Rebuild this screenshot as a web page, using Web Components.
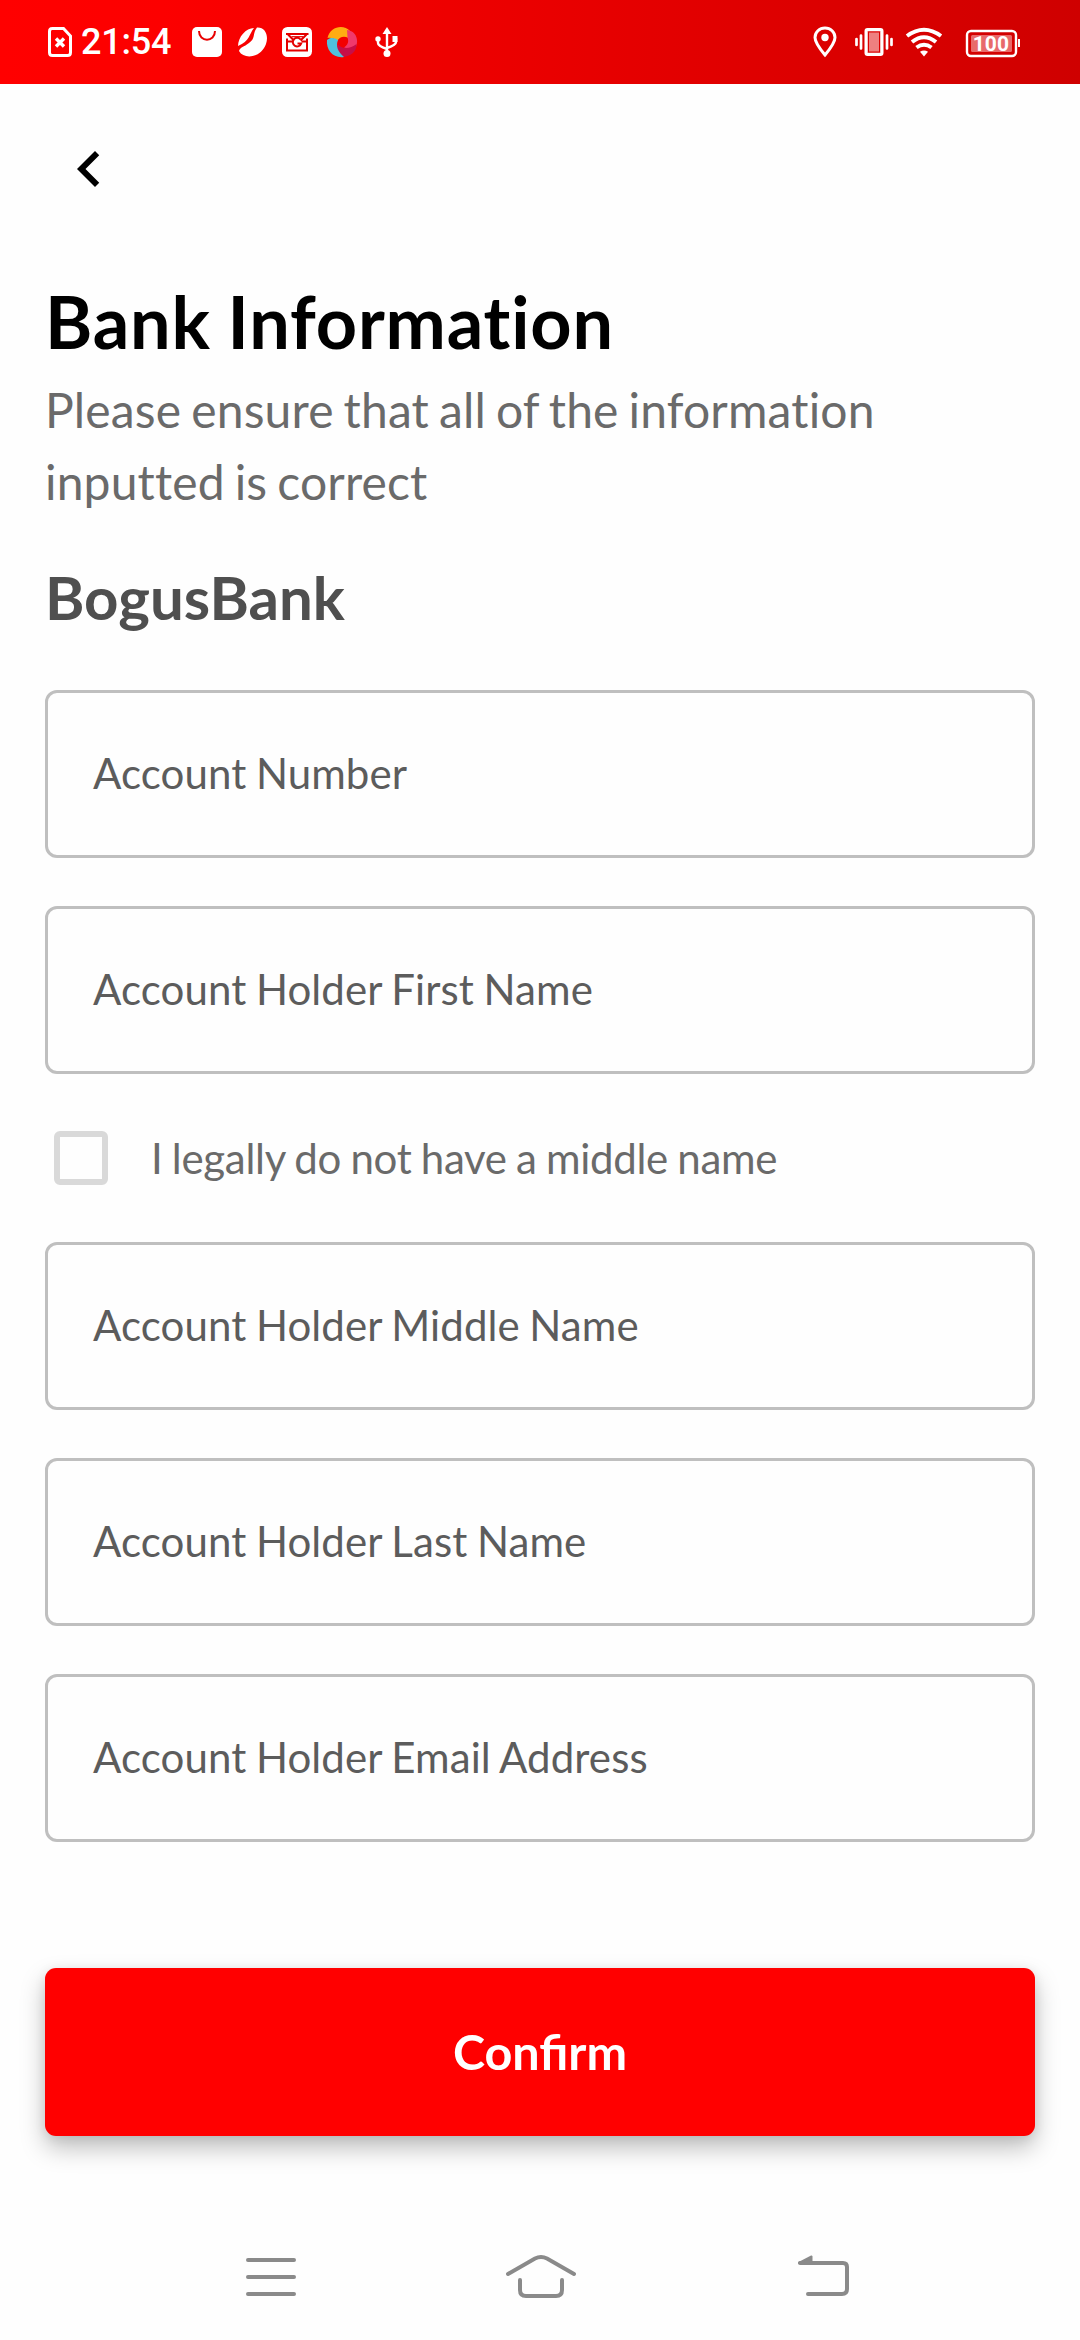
<!DOCTYPE html>
<html lang="en">
<head>
<meta charset="utf-8">
<title>Bank Information</title>
<style>
html,body{margin:0;padding:0;background:#fefefe}
body{width:1080px;height:2340px;overflow:hidden;font-family:Lato,"Liberation Sans",sans-serif}
</style>
</head>
<body>
<bank-screen></bank-screen>
<script>
function define(name, html) {
  customElements.define(name, class extends HTMLElement {
    constructor() {
      super();
      const t = document.createElement('template');
      t.innerHTML = html;
      this.attachShadow({ mode: 'open' }).appendChild(t.content.cloneNode(true));
    }
  });
}

define('status-bar', `
<style>
:host{display:flex;justify-content:space-between;height:84px;box-sizing:border-box;padding:0 59px 0 47px;background:linear-gradient(90deg,#f00 0%,#fc0000 15%,#cf0000 100%);color:#fff;font-family:Roboto,sans-serif}
div{display:flex;align-items:center}
svg{display:block;flex:none;height:84px}
.time{font-size:36px;font-weight:500;line-height:42px;width:93px;margin-left:8px;white-space:nowrap;letter-spacing:-.2px}
.left svg+svg{margin-left:13px}
.left svg:last-child{margin-left:16px}
.battery{display:grid;margin-left:22px}
.battery>*{grid-area:1/1}
.battery span{font-size:21px;font-weight:700;line-height:24px;width:52px;text-align:center;align-self:center;padding-top:3px;letter-spacing:.2px}
</style>
<div class="left">
 <svg width="26" viewBox="47 0 26 84" fill="none" stroke="#fff" stroke-width="3"><path d="M51.500 28.500H63.500L70.500 36V52.500Q70.500 55.500 67.500 55.500H52.500Q49.500 55.500 49.500 52.500V31.500Q49.500 28.500 52 28.500Z"/><path d="M56 38.500L64 46.500M64 38.500L56 46.500" stroke-width="3.400"/></svg>
 <span class="time">21:54</span>
 <svg width="32" viewBox="191 0 32 84" style="margin-left:17px"><rect x="192" y="27" width="30" height="30" rx="5" fill="#fff"/><path d="M199 31C199 42.500 215 42.500 215 31" fill="none" stroke="#e80000" stroke-width="2"/></svg>
 <svg width="32" viewBox="236 0 32 84" fill="#fff"><path d="M254 28C246 28 238 37 238 46C250 41 249 34 254 28Z"/><path d="M257 27.500C252 34 256 38 249 43C244 47 240 47 239 51C244 60 261 58 266 44C269 35 265 27 257 27.500Z"/></svg>
 <svg width="32" viewBox="281 0 32 84"><rect x="282" y="27" width="30" height="30" rx="5.500" fill="#fff"/><g fill="none" stroke="#e30000" stroke-width="2"><path d="M286 34H308.500M288 34.500L294 40.500M306.500 34.500L300.500 40.500M287 38.500V50.500H307V38.500M288 41.500H292.500M301.500 41.500H306"/><path d="M291.500 36.700H303" stroke-width="1.200"/><path d="M300.500 39.500A4.300 4.300 0 1 0 301.200 43.500H297.500"/></g></svg>
 <svg width="32" viewBox="326 0 32 84"><path d="M327.500 38C330 26 344 24 350 31L348.500 38C344 35.500 340 36.500 337 41C334 38 330 37 327.500 38Z" fill="#ffac12"/><path d="M347 30C357 31 360 42 354 50L344 47.500C348 45 349 42 347.500 37.500Z" fill="#f0396b"/><path d="M337.500 44C342 49.500 350 49 356.500 44C357 51 351 57 341 57C338 53 337 49 337.500 44Z" fill="#c70e48"/><path d="M327 40C330 37 335 37.500 338 40C335.500 46 338 52 344 57C333 58.500 326 50 327 40Z" fill="#4fc1dc"/></svg>
 <svg width="26" viewBox="374 0 26 84"><g fill="none" stroke="#fff" stroke-width="2.400"><path d="M387 53V31M378 40V43Q378 46 387 49M396 38V42Q396 45 387 48"/></g><g fill="#fff"><path d="M387 27L391.500 34H382.500Z"/><circle cx="387" cy="53.500" r="3.500"/><circle cx="378" cy="39" r="2.700"/><rect x="392.500" y="36" width="5" height="6"/></g></svg>
</div>
<div class="right">
 <svg width="24" viewBox="813 0 24 84"><path d="M825 55Q815 43 815 37.500A10 9.500 0 0 1 835 37.500Q835 43 825 55Z" fill="none" stroke="#fff" stroke-width="3"/><circle cx="825" cy="37.500" r="3.700" fill="#fff"/></svg>
 <svg width="40" viewBox="854 0 40 84" style="margin-left:17px"><rect x="866" y="29.500" width="16" height="25" rx="1.500" fill="#ee8080" stroke="#fff" stroke-width="3"/><rect x="868.500" y="32" width="11" height="20" fill="none" stroke="#dc0000" stroke-width="1"/><g stroke="#fff" stroke-width="2.700" stroke-linecap="round"><path d="M861 35.500V48.500M887 35.500V48.500M856.500 39V45M891.500 39V45"/></g></svg>
 <svg width="38" viewBox="905 0 38 84" style="margin-left:11px"><g fill="none" stroke="#fff" stroke-width="4"><path d="M907 36Q924 23.500 941 36"/><path d="M912 42Q924 32.500 936 42"/><path d="M916.500 47.500Q924 42 931.500 47.500"/></g><path d="M920 51.700Q924 49.500 928 51.700L924 56.500Z" fill="#fff"/></svg>
 <div class="battery"><svg width="56" viewBox="965 0 56 84"><rect x="967" y="31" width="49" height="25" rx="4" fill="none" stroke="#fff" stroke-width="2.400"/><rect x="971" y="35" width="41" height="17" rx="1.500" fill="#e86b6b"/><path d="M1019 39V47" stroke="#fff" stroke-width="2"/></svg><span>100</span></div>
</div>`);

define('app-header', `
<style>
:host{display:flex;height:192px;padding:49px 0 0 53px;box-sizing:border-box}
button{all:unset;display:block;width:72px;height:72px}
svg{display:block}
</style>
<button aria-label="Back"><svg width="72" height="72" viewBox="0 0 24 24"><path d="M15.410 16.590L10.830 12l4.580-4.590L14 6l-6 6 6 6z"/></svg></button>`);

define('page-title', `
<style>:host{display:block;font-size:72px;font-weight:700;line-height:90px;color:#000;white-space:nowrap;letter-spacing:.83px;word-spacing:-1.5px;font-variant-ligatures:none}</style><slot></slot>`);
define('page-note', `
<style>:host{display:block;font-size:48px;line-height:72px;color:#6a6a6a;margin-top:8px;width:900px;letter-spacing:.15px;word-spacing:-2.45px;font-variant-ligatures:none}</style><slot></slot>`);
define('bank-name', `
<style>:host{display:block;font-size:60px;font-weight:700;line-height:72px;color:#4f4f4f;margin-top:43px}</style><slot></slot>`);
define('text-field', `
<style>:host{display:flex;align-items:center;height:168px;box-sizing:border-box;border:3px solid #bfbfbf;border-radius:12px;padding:0 45px 2px;font-size:42px;line-height:50px;color:#5c5c5c;letter-spacing:.1px;word-spacing:-1.3px;font-variant-ligatures:none}</style><slot></slot>`);
define('check-row', `
<style>
:host{display:flex;align-items:center;height:168px;margin:-48px 0;padding-left:9px;font-size:42px;line-height:50px;color:#6a6a6a;letter-spacing:-.3px;word-spacing:-1.1px}
i{width:42px;height:42px;border:6px solid #d9d9d9;border-radius:6px;margin-right:43px;flex:none}
</style><i></i><span><slot></slot></span>`);
define('primary-button', `
<style>:host{display:flex;align-items:center;justify-content:center;height:168px;box-sizing:border-box;padding-bottom:2px;margin-top:126px;border-radius:11px;background:#f00;color:#fff;font-size:48.5px;font-weight:700;line-height:58px;box-shadow:0 12px 24px rgba(0,0,0,.25),0 2px 12px rgba(0,0,0,.08)}</style><slot></slot>`);

define('nav-bar', `
<style>
:host{display:flex;height:128px;padding-left:245px;box-sizing:border-box}
svg{display:block;flex:none;height:128px;fill:none;stroke:#8a8a8a;stroke-width:4;stroke-linecap:round}
.home{margin:0 220px 0 208px}
</style>
<svg width="52" viewBox="245 2212 52 128"><path d="M248 2260H294M248 2277H294M248 2294H294"/></svg>
<svg class="home" width="72" viewBox="505 2212 72 128"><path d="M508 2274L535 2258.500Q541 2255.500 547 2258.500L574 2274M520 2280V2290Q520 2296 526 2296H556Q562 2296 562 2290V2280"/></svg>
<svg width="53" viewBox="797 2212 53 128"><path d="M800 2263H843Q847 2263 847 2267V2289Q847 2294 842 2294H808"/><path d="M799 2263L811.500 2256.500V2263Z" fill="#8a8a8a" stroke-width="2" stroke-linejoin="round"/></svg>`);

define('bank-screen', `
<style>
:host{display:flex;flex-direction:column;width:1080px;height:2340px;background:#fefefe}
main{flex:1;padding:0 45px}
.fields{display:flex;flex-direction:column;gap:48px;margin-top:57px}
</style>
<status-bar></status-bar>
<app-header></app-header>
<main>
<page-title>Bank Information</page-title>
<page-note>Please ensure that all of the information inputted is correct</page-note>
<bank-name>BogusBank</bank-name>
<div class="fields">
<text-field>Account Number</text-field>
<text-field>Account Holder First Name</text-field>
<check-row>I legally do not have a middle name</check-row>
<text-field>Account Holder Middle Name</text-field>
<text-field>Account Holder Last Name</text-field>
<text-field>Account Holder Email Address</text-field>
</div>
<primary-button>Confirm</primary-button>
</main>
<nav-bar></nav-bar>`);
</script>
</body>
</html>
